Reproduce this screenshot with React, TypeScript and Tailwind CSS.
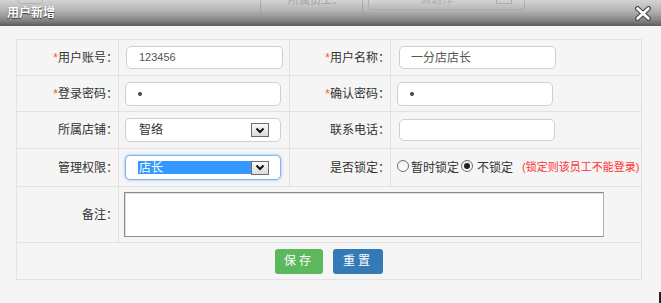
import React from "react";

const Star = () => <span className="text-[#f2592b]">*</span>;

function Label({ children, star }: { children: React.ReactNode; star?: boolean }) {
  return (
    <div className="flex items-center justify-end border-r border-b border-[#e2e2e2] text-[12px] text-[#333]">
      {star && <Star />}
      <span>{children}</span>
    </div>
  );
}

function Arrow() {
  return (
    <span className="flex h-[14px] w-[18px] items-center justify-center border border-[#6d6d6d] bg-gradient-to-b from-[#fafafa] to-[#dcdcdc]">
      <svg width="10" height="7" viewBox="0 0 10 7">
        <path d="M1.5 1.5 L5 5 L8.5 1.5" fill="none" stroke="#111" strokeWidth="2" />
      </svg>
    </span>
  );
}

function Radio({ checked }: { checked?: boolean }) {
  return (
    <span className="mb-[4px] flex h-[12px] w-[12px] items-center justify-center rounded-full border border-[#6e6e6e] bg-gradient-to-b from-[#f0f0f0] to-white">
      {checked && <span className="h-[6px] w-[6px] rounded-full bg-[#222]" />}
    </span>
  );
}

export default function App() {
  return (
    <div className="relative h-[303px] w-[661px] overflow-hidden bg-[#f5f5f5] font-['Liberation_Sans','Noto_Sans_CJK_SC',sans-serif]">
      {/* title bar */}
      <div className="relative h-[26px] bg-[linear-gradient(to_bottom,#d4d4d4_0%,#b4b4b4_40%,#8a8a8a_75%,#5c5c5c_100%)]">
        {/* ghost of page behind */}
        <div className="absolute left-[17px] top-[-6px] h-[10px] w-[26px] rounded-[3px] border border-[#a9a9a9] opacity-60" />
        <div className="absolute left-[260px] top-0 h-[17px] w-px bg-[#9c9c9c] opacity-70" />
        <div className="absolute left-[362px] top-0 h-[17px] w-px bg-[#9c9c9c] opacity-70" />
        <div className="absolute left-[288px] top-[-8px] text-[11px] text-[#8e8e8e] opacity-70">所属员工：</div>
        <div className="absolute left-[368px] top-[-10px] h-[20px] w-[157px] rounded-[4px] border border-[#a4a4a4] opacity-70" />
        <div className="absolute left-[420px] top-[-9px] text-[11px] text-[#9a9a9a] opacity-60">请选择</div>
        <div className="absolute left-[496px] top-[-8px] h-[12px] w-[16px] border border-[#9a9a9a] opacity-60" />
        <div className="absolute left-[7px] top-0 flex h-[26px] items-center text-[12px] font-bold text-white [text-shadow:0_1px_1px_rgba(0,0,0,0.7)]">
          用户新增
        </div>
        <svg className="absolute left-[635px] top-[6px]" width="16" height="15" viewBox="0 0 16 15">
          <path d="M2.5 2.5 L13.5 12.5 M13.5 2.5 L2.5 12.5" stroke="#4a4a4a" strokeWidth="5" strokeLinecap="round" />
          <path d="M2.5 2.5 L13.5 12.5 M13.5 2.5 L2.5 12.5" stroke="#fff" strokeWidth="2.6" strokeLinecap="round" />
        </svg>
      </div>

      {/* form table */}
      <div className="ml-[16px] mt-[13px] grid w-[626px] grid-cols-[102px_171px_101px_251px] grid-rows-[36px_36px_37px_38px_56px_37px] border-l border-t border-[#e2e2e2]">
        {/* row 1 */}
        <Label star>用户账号：</Label>
        <div className="flex items-center border-r border-b border-[#e2e2e2] pl-[7px]">
          <div className="flex h-[23px] w-[157px] items-center rounded-[5px] border border-[#cfcfcf] bg-white pl-[12px] text-[11px] text-[#555]">
            123456
          </div>
        </div>
        <Label star>用户名称：</Label>
        <div className="flex items-center border-r border-b border-[#e2e2e2] pl-[8px]">
          <div className="flex h-[23px] w-[157px] items-center rounded-[5px] border border-[#cfcfcf] bg-white pl-[11px] text-[12px] text-[#555]">
            一分店店长
          </div>
        </div>

        {/* row 2 */}
        <Label star>登录密码：</Label>
        <div className="flex items-center border-r border-b border-[#e2e2e2] pl-[6px]">
          <div className="flex h-[24px] w-[156px] items-center rounded-[5px] border border-[#cfcfcf] bg-white pl-[12px]">
            <span className="h-[4px] w-[4px] rounded-full bg-[#444]" />
          </div>
        </div>
        <Label star>确认密码：</Label>
        <div className="flex items-center border-r border-b border-[#e2e2e2] pl-[6px]">
          <div className="flex h-[24px] w-[156px] items-center rounded-[5px] border border-[#cfcfcf] bg-white pl-[12px]">
            <span className="h-[4px] w-[4px] rounded-full bg-[#444]" />
          </div>
        </div>

        {/* row 3 */}
        <Label>所属店铺：</Label>
        <div className="flex items-center border-r border-b border-[#e2e2e2] pl-[6px]">
          <div className="flex h-[24px] w-[156px] items-center justify-between rounded-[5px] border border-[#cfcfcf] bg-white pl-[13px] pr-[11px] text-[12px] text-[#333]">
            <span>智络</span>
            <Arrow />
          </div>
        </div>
        <Label>联系电话：</Label>
        <div className="flex items-center border-r border-b border-[#e2e2e2] pl-[8px]">
          <div className="h-[22px] w-[156px] rounded-[5px] border border-[#cfcfcf] bg-white" />
        </div>

        {/* row 4 */}
        <Label>管理权限：</Label>
        <div className="flex items-center border-r border-b border-[#e2e2e2] pl-[6px]">
          <div className="flex h-[25px] w-[156px] items-center rounded-[5px] border border-[#7fb4ea] bg-white pl-[12px] pr-[11px] shadow-[0_0_3px_rgba(102,175,233,0.8)]">
            <span className="flex h-[13px] w-[114px] items-center bg-[#3399ff] pl-[1px] text-[12px] text-white">店长</span>
            <Arrow />
          </div>
        </div>
        <Label>是否锁定：</Label>
        <div className="flex items-center border-r border-b border-[#e2e2e2] pl-[6px] text-[12px] text-[#333]">
          <Radio />
          <span className="ml-[2px]">暂时锁定</span>
          <span className="ml-[2px]">
            <Radio checked />
          </span>
          <span className="ml-[4px]">不锁定</span>
          <span className="ml-[9px] text-[11px] text-[#f33]">(锁定则该员工不能登录)</span>
        </div>

        {/* remark */}
        <Label>备注：</Label>
        <div className="col-span-3 flex items-center border-r border-b border-[#e2e2e2] pl-[5px]">
          <div className="h-[45px] w-[480px] border border-t-[#8a8a8a] border-l-[#8a8a8a] border-r-[#b0b0b0] border-b-[#8f8f8f] bg-white shadow-[inset_1px_1px_0_#e0e0e0]" />
        </div>

        {/* buttons */}
        <div className="col-span-4 flex items-center justify-center gap-[10px] border-r border-b border-[#e2e2e2]">
          <div className="flex h-[25px] w-[48px] items-center justify-center rounded-[3px] bg-[#5cb85c] text-[12px] tracking-[3px] text-white">
            保存
          </div>
          <div className="flex h-[25px] w-[50px] items-center justify-center rounded-[3px] bg-[#337ab7] text-[12px] tracking-[3px] text-white">
            重置
          </div>
        </div>
      </div>

      <div className="absolute left-[659px] top-[292px] h-[11px] w-[2px] bg-[#222]" />
    </div>
  );
}
